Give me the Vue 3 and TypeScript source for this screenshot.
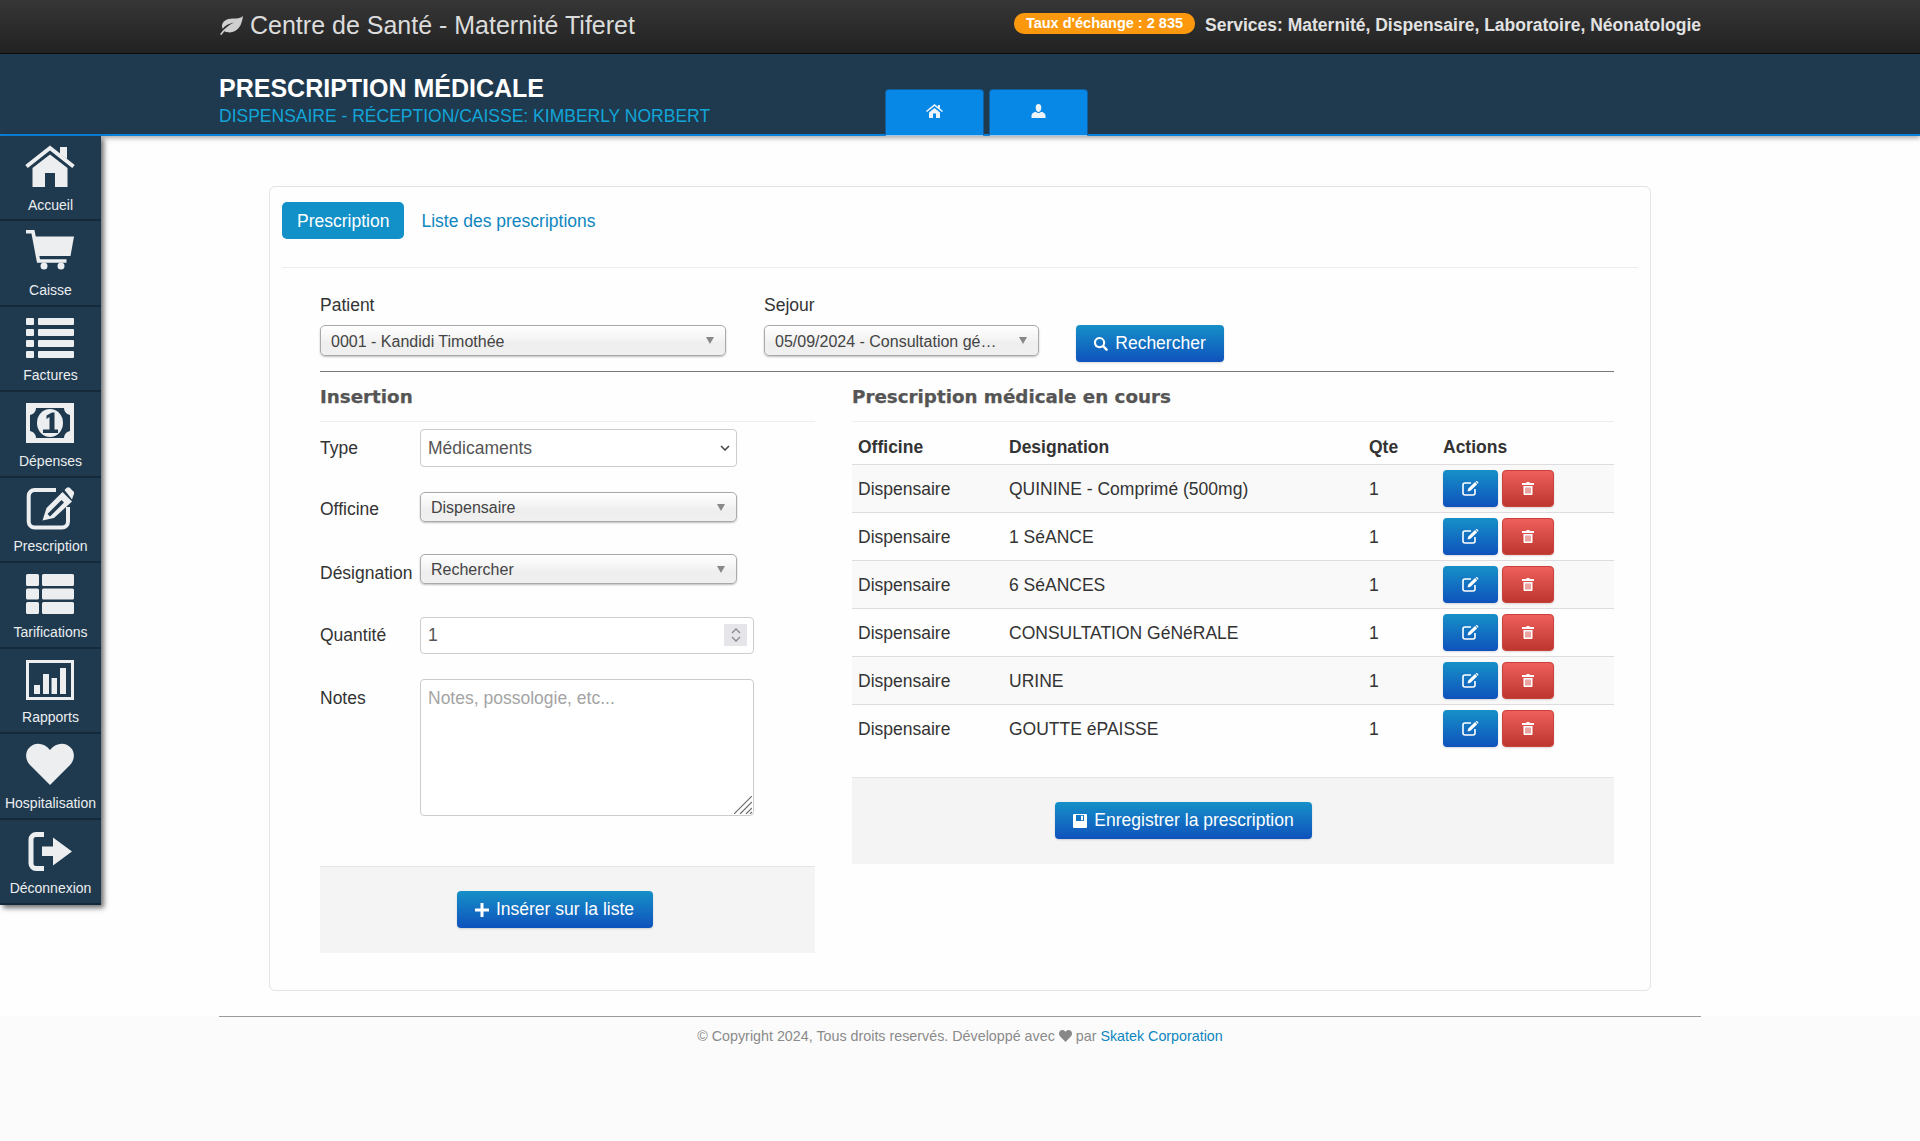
<script setup lang="ts">
interface Shape { d: string; fill?: string; stroke?: string; sw?: number }
interface MenuItem { label: string; w: number; h: number; top: number; shapes: Shape[] }

const L = '#eceef0'
const D = '#1f3a4f'

const menu: MenuItem[] = [
  { label: 'Accueil', w: 50, h: 42, top: 9, shapes: [
    { d: 'M1.500 21.500 25 3 48.500 21.500', fill: 'none', stroke: L, sw: 4 },
    { d: 'M35 2h7v12l-7-5z', fill: L },
    { d: 'M7.500 23 25 9.500 42.500 23v19H30V28H20v14H7.500z', fill: L }
  ] },
  { label: 'Caisse', w: 48, h: 41, top: 9, shapes: [
    { d: 'M0 1.800h7L12.500 31h28', fill: 'none', stroke: L, sw: 3.600 },
    { d: 'M8 6.500h40l-3.500 19.500H11.500z', fill: L },
    { d: 'M14.500 36a3.500 3.500 0 1 0 7 0 3.500 3.500 0 1 0-7 0zM31.500 36a3.500 3.500 0 1 0 7 0 3.500 3.500 0 1 0-7 0z', fill: L }
  ] },
  { label: 'Factures', w: 48, h: 41, top: 11, shapes: [
    { d: 'M1 0h6a1 1 0 0 1 1 1v5a1 1 0 0 1-1 1H1a1 1 0 0 1-1-1V1a1 1 0 0 1 1-1zM13 0h34a1 1 0 0 1 1 1v5a1 1 0 0 1-1 1H13a1 1 0 0 1-1-1V1a1 1 0 0 1 1-1z', fill: L },
    { d: 'M1 11h6a1 1 0 0 1 1 1v5a1 1 0 0 1-1 1H1a1 1 0 0 1-1-1v-5a1 1 0 0 1 1-1zM13 11h34a1 1 0 0 1 1 1v5a1 1 0 0 1-1 1H13a1 1 0 0 1-1-1v-5a1 1 0 0 1 1-1z', fill: L },
    { d: 'M1 22h6a1 1 0 0 1 1 1v5a1 1 0 0 1-1 1H1a1 1 0 0 1-1-1v-5a1 1 0 0 1 1-1zM13 22h34a1 1 0 0 1 1 1v5a1 1 0 0 1-1 1H13a1 1 0 0 1-1-1v-5a1 1 0 0 1 1-1z', fill: L },
    { d: 'M1 33h6a1 1 0 0 1 1 1v5a1 1 0 0 1-1 1H1a1 1 0 0 1-1-1v-5a1 1 0 0 1 1-1zM13 33h34a1 1 0 0 1 1 1v5a1 1 0 0 1-1 1H13a1 1 0 0 1-1-1v-5a1 1 0 0 1 1-1z', fill: L }
  ] },
  { label: 'Dépenses', w: 48, h: 41, top: 11, shapes: [
    { d: 'M0 0h48v40H0z', fill: L },
    { d: 'M10 5h28c0 3 2 6 6 7v16c-4 1-6 4-6 7H10c0-3-2-6-6-7V12c4-1 6-4 6-7z', fill: D },
    { d: 'M11 20a13 14 0 1 0 26 0 13 14 0 1 0-26 0z', fill: L },
    { d: 'M20.500 12.500 26 9.500h2.500v17H32v3.500H17v-3.500h6.500V14l-3 2z', fill: D }
  ] },
  { label: 'Prescription', w: 48, h: 43, top: 9, shapes: [
    { d: 'M30 3H8.700a6 6 0 0 0-6 6v25.500a6 6 0 0 0 6 6H36a6 6 0 0 0 6-6V20', fill: 'none', stroke: L, sw: 4 },
    { d: 'M16.500 33.500l4-12.500L36.500 5 46 14.500 28 31z', fill: L },
    { d: 'M38.500 3l2-2c1-1 2.500-1 3.500 0l3.500 3.500c1 1 1 2.500 0 3.500l-1.500 4.500z', fill: L },
    { d: 'M21.500 27l2.500 2.500L38 15.500 35.500 13z', fill: D }
  ] },
  { label: 'Tarifications', w: 48, h: 40, top: 11, shapes: [
    { d: 'M1.500 0h10a1.500 1.500 0 0 1 1.500 1.500v9a1.500 1.500 0 0 1-1.500 1.500h-10A1.500 1.500 0 0 1 0 10.500v-9A1.500 1.500 0 0 1 1.500 0zM17.500 0h29A1.500 1.500 0 0 1 48 1.500v9a1.500 1.500 0 0 1-1.500 1.500h-29a1.500 1.500 0 0 1-1.500-1.500v-9A1.500 1.500 0 0 1 17.500 0z', fill: L },
    { d: 'M1.500 14.500h10a1.500 1.500 0 0 1 1.500 1.500v8a1.500 1.500 0 0 1-1.500 1.500h-10A1.500 1.500 0 0 1 0 24v-8a1.500 1.500 0 0 1 1.500-1.500zM17.500 14.500h29A1.500 1.500 0 0 1 48 16v8a1.500 1.500 0 0 1-1.500 1.500h-29A1.500 1.500 0 0 1 16 24v-8a1.500 1.500 0 0 1 1.500-1.500z', fill: L },
    { d: 'M1.500 28h10a1.500 1.500 0 0 1 1.500 1.500v9a1.500 1.500 0 0 1-1.500 1.500h-10A1.500 1.500 0 0 1 0 38.500v-9A1.500 1.500 0 0 1 1.500 28zM17.500 28h29a1.500 1.500 0 0 1 1.500 1.500v9a1.500 1.500 0 0 1-1.500 1.500h-29a1.500 1.500 0 0 1-1.500-1.500v-9a1.500 1.500 0 0 1 1.500-1.500z', fill: L }
  ] },
  { label: 'Rapports', w: 48, h: 41, top: 11, shapes: [
    { d: 'M1.500 1.500h45v37h-45z', fill: 'none', stroke: L, sw: 3 },
    { d: 'M8 25h6v9H8zM17 14h6v20h-6zM25.500 18h5.500v16h-5.500zM34 8h6v26h-6z', fill: L }
  ] },
  { label: 'Hospitalisation', w: 48, h: 42, top: 9, shapes: [
    { d: 'M24 42 4 22C-1 17-1 9 3 5c5-6 15-6 21 2 6-8 16-8 21-2 4 4 4 12-1 17z', fill: L }
  ] },
  { label: 'Déconnexion', w: 44, h: 42, top: 9, shapes: [
    { d: 'M16 5.500H8a5 5 0 0 0-5 5v24a5 5 0 0 0 5 5h8', fill: 'none', stroke: L, sw: 5 },
    { d: 'M14 17.500h11V8.500l19 14-19 14v-9.500H14z', fill: L }
  ] }
]

const rows: string[] = [
  'QUININE - Comprimé (500mg)',
  '1 SéANCE',
  '6 SéANCES',
  'CONSULTATION GéNéRALE',
  'URINE',
  'GOUTTE éPAISSE'
]
</script>

<template>
  <div class="page">
    <header class="topbar">
      <div class="wrap top-inner">
        <div class="brand">
          <svg class="leaf" viewBox="0 0 24 19"><path d="M24 0C22 2 19 2.500 14 2.500 7 2.500 3 6 3 10c0 1 .2 2 .7 2.800C6 9.500 10 7.500 15 6.500 10 9 5 12.500 1 18.200L2.500 19c1-1.500 2-2.800 3-3.800 1.500.8 3 1.200 5 1.200C19 16.400 23 9 24 0z" /></svg>
          <span>Centre de Santé - Maternité Tiferet</span>
        </div>
        <div class="top-right">
          <span class="pill">Taux d'échange : 2 835</span>
          <span class="services">Services: Maternité, Dispensaire, Laboratoire, Néonatologie</span>
        </div>
      </div>
    </header>

    <section class="subbar">
      <div class="wrap sub-inner">
        <div class="titles">
          <h1>PRESCRIPTION MÉDICALE</h1>
          <p>DISPENSAIRE - RÉCEPTION/CAISSE: KIMBERLY NORBERT</p>
        </div>
        <nav class="head-tabs">
          <a class="head-tab">
            <svg width="17" height="14" viewBox="0 0 17 14"><path d="M8.500 0 0 7l1 1 7.500-6L16 8l1-1-3-2.500V1h-2v1.800zM3 8.500V14h4V9.500h3V14h4V8.500L8.500 4z" fill="#eef3f8" /></svg>
          </a>
          <a class="head-tab">
            <svg width="15" height="14" viewBox="0 0 15 14"><path d="M7.500 0C5.500 0 4.700 1.500 4.700 3.500S5.500 8 7.500 8s2.800-2.500 2.800-4.500S9.500 0 7.500 0zM5 7.800C2.500 8.500.5 9.500.5 11.500V14h14v-2.500c0-2-2-3-4.500-3.700-.6.800-1.500 1.200-2.500 1.200S5.600 8.600 5 7.800z" fill="#eef3f8" /></svg>
          </a>
        </nav>
      </div>
    </section>

    <aside class="sidebar">
      <a v-for="item in menu" :key="item.label" class="side-item">
        <span class="side-icon" :style="{ paddingTop: item.top + 'px' }">
          <svg :width="item.w" :height="item.h" :viewBox="`0 0 ${item.w} ${item.h}`">
            <path v-for="(s, i) in item.shapes" :key="i" :d="s.d" :fill="s.fill" :stroke="s.stroke" :stroke-width="s.sw" />
          </svg>
        </span>
        <span class="side-label">{{ item.label }}</span>
      </a>
    </aside>

    <main class="main">
      <div class="card">
        <div class="tabs">
          <a class="tab active">Prescription</a>
          <a class="tab">Liste des prescriptions</a>
        </div>

        <div class="card-body">
          <div class="filters">
            <div class="filter patient">
              <label>Patient</label>
              <div class="s2"><span class="s2-text">0001 - Kandidi Timothée</span><i class="s2-arrow"></i></div>
            </div>
            <div class="filter sejour">
              <label>Sejour</label>
              <div class="s2"><span class="s2-text">05/09/2024 - Consultation gé…</span><i class="s2-arrow"></i></div>
            </div>
            <button class="btn btn-blue search-btn" type="button">
              <svg width="14" height="14" viewBox="0 0 15 15"><path d="M6 0a6 6 0 1 0 3.200 11L12.800 14.600a1.300 1.300 0 0 0 1.800-1.800L11 9.200A6 6 0 0 0 6 0zm0 2.200a3.800 3.800 0 1 1 0 7.600 3.800 3.800 0 0 1 0-7.600z" fill="#fff" /></svg>
              Rechercher
            </button>
          </div>

          <div class="columns">
            <section class="col-left">
              <h2>Insertion</h2>
              <div class="form-row type-row">
                <label>Type</label>
                <div class="field">
                  <select class="native"><option>Médicaments</option></select>
                  <svg class="chevron" width="10" height="6" viewBox="0 0 10 6"><path d="M1 1l4 4 4-4" fill="none" stroke="#444" stroke-width="1.500" /></svg>
                </div>
              </div>
              <div class="form-row officine-row">
                <label>Officine</label>
                <div class="s2 s2-form"><span class="s2-text">Dispensaire</span><i class="s2-arrow"></i></div>
              </div>
              <div class="form-row designation-row">
                <label>Désignation</label>
                <div class="s2 s2-form"><span class="s2-text">Rechercher</span><i class="s2-arrow"></i></div>
              </div>
              <div class="form-row qty-row">
                <label>Quantité</label>
                <div class="field">
                  <input class="num" type="number" value="1" />
                  <span class="spin">
                    <svg width="10" height="16" viewBox="0 0 10 16"><path d="M1 6l4-4 4 4M1 10l4 4 4-4" fill="none" stroke="#8a8a8a" stroke-width="1.300" /></svg>
                  </span>
                </div>
              </div>
              <div class="form-row notes-row">
                <label>Notes</label>
                <div class="field">
                  <textarea class="notes" placeholder="Notes, possologie, etc..."></textarea>
                  <svg class="grip" width="18" height="18" viewBox="0 0 18 18"><path d="M0 18 18 0M6 18 18 6M12 18l6-6M16 18l2-2" fill="none" stroke="#6d6d6d" stroke-width="1.200" /></svg>
                </div>
              </div>
              <div class="actions left-actions">
                <button class="btn btn-blue insert-btn" type="button">
                  <svg width="14" height="14" viewBox="0 0 14 14"><path d="M5.500 0h3v5.500H14v3H8.500V14h-3V8.500H0v-3h5.500z" fill="#fff" /></svg>
                  Insérer sur la liste
                </button>
              </div>
            </section>

            <section class="col-right">
              <h2>Prescription médicale en cours</h2>
              <table>
                <thead>
                  <tr>
                    <th class="c1">Officine</th>
                    <th class="c2">Designation</th>
                    <th class="c3">Qte</th>
                    <th class="c4">Actions</th>
                  </tr>
                </thead>
                <tbody>
                  <tr v-for="r in rows" :key="r">
                    <td class="txt">Dispensaire</td>
                    <td class="txt">{{ r }}</td>
                    <td class="txt">1</td>
                    <td>
                      <div class="row-btns">
                        <button class="btn btn-blue mini edit" type="button">
                          <svg width="17" height="15" viewBox="0 0 17 15"><path d="M9 2H3a2 2 0 0 0-2 2v8a2 2 0 0 0 2 2h8a2 2 0 0 0 2-2V8" fill="none" stroke="#fff" stroke-width="1.600" /><path d="M5.500 10.500l.8-3L13 1l2.200 2.200L8.500 9.800zM14 .2c.4-.3.900-.3 1.200 0l1 1c.3.300.3.800 0 1.100l-.4.400L13.600.6z" fill="#fff" /></svg>
                        </button>
                        <button class="btn btn-red mini del" type="button">
                          <svg width="12" height="13" viewBox="0 0 12 13"><path d="M4.500 0h3v1H12v2H0V1h4.500zM1.500 4h9v8a1 1 0 0 1-1 1h-7a1 1 0 0 1-1-1zM3.500 5.500v6h1v-6zM5.500 5.500v6h1v-6zM7.500 5.500v6h1v-6z" fill="#fff" fill-rule="evenodd" /></svg>
                        </button>
                      </div>
                    </td>
                  </tr>
                </tbody>
              </table>
              <div class="actions right-actions">
                <button class="btn btn-blue save-btn" type="button">
                  <svg width="14" height="14" viewBox="0 0 14 14"><path d="M1 0h12a1 1 0 0 1 1 1v12a1 1 0 0 1-1 1H1a1 1 0 0 1-1-1V1a1 1 0 0 1 1-1zm2 1v6h8V1zm5 .7h2v4.500H8z" fill="#fff" fill-rule="evenodd" /></svg>
                  Enregistrer la prescription
                </button>
              </div>
            </section>
          </div>
        </div>
      </div>
    </main>

    <footer class="footer">
      <div class="wrap foot-inner">
        © Copyright 2024, Tous droits reservés. Développé avec
        <svg width="13" height="12" viewBox="0 0 13 12"><path d="M6.500 12 1 6.200C-.4 4.700-.3 2.300 1 1c1.500-1.400 4-1.300 5.500.8C8-.3 10.500-.4 12 1c1.300 1.300 1.400 3.700 0 5.200z" fill="#888" /></svg>
        par <a>Skatek Corporation</a>
      </div>
    </footer>
  </div>
</template>

<style scoped>
.page {
  position: relative;
  width: 1920px;
  height: 1141px;
  overflow: hidden;
  background: #fefefe;
  font-family: "Liberation Sans", Arial, sans-serif;
  color: #333;
}
.wrap { width: 1482px; margin: 0 auto; }

/* top bar */
.topbar {
  height: 53px;
  background: linear-gradient(to bottom, #363636, #222222);
  border-bottom: 1px solid #0c0c0c;
}
.top-inner { height: 100%; display: flex; justify-content: space-between; align-items: center; }
.brand { display: flex; align-items: center; gap: 7px; color: #dcdcdc; font-size: 25px; margin-top: -3px; }
.leaf { width: 24px; height: 19px; fill: #cfcfcf; }
.top-right { display: flex; align-items: center; gap: 10px; }
.pill {
  display: block;
  background: #fb980e;
  color: #fff;
  font-size: 14.500px;
  font-weight: 700;
  line-height: 20px;
  height: 21px;
  padding: 0 12px;
  border-radius: 10px;
  margin-top: -6px;
}
.services { color: #e2e2e2; font-size: 17.500px; font-weight: 700; margin-top: -2px; }

/* title band */
.subbar {
  height: 80px;
  background: #1f3a4f;
  border-bottom: 2px solid #0a80d8;
  box-shadow: 0 2px 5px rgba(0, 0, 0, 0.35);
  position: relative;
}
.sub-inner { display: flex; height: 100%; }
.titles { width: 666px; padding-top: 20px; }
.titles h1 { margin: 0; font-size: 25px; line-height: 28px; font-weight: 700; color: #fff; }
.titles p { margin: 4px 0 0; font-size: 17.500px; line-height: 20px; color: #12a5d8; }
.head-tabs { display: flex; align-items: flex-end; gap: 5px; margin-bottom: -2px; }
.head-tab {
  width: 99px;
  height: 47px;
  background: #0787e6;
  border: 1px solid #0f5f9f;
  border-bottom: 1px solid #9cc9ea;
  border-radius: 4px 4px 0 0;
  box-sizing: border-box;
  display: flex;
  justify-content: center;
  padding-top: 14px;
}

/* sidebar */
.sidebar {
  position: absolute;
  left: 0;
  top: 136px;
  width: 101px;
  height: 769px;
  background: #1f3a4f;
  box-shadow: 3px 3px 5px rgba(0, 0, 0, 0.55);
}
.side-item {
  display: flex;
  flex-direction: column;
  align-items: center;
  height: 85.440px;
  box-sizing: border-box;
  border-bottom: 2px solid #14293a;
  color: #eceef0;
  font-size: 14px;
}
.side-icon { height: 56px; margin-right: 1px; box-sizing: border-box; display: flex; align-items: flex-start; }
.side-label { line-height: 16px; margin-top: 4.500px; white-space: nowrap; }

/* card */
.main { padding-top: 50px; }
.card {
  width: 1382px;
  height: 805px;
  margin-left: 269px;
  box-sizing: border-box;
  border: 1px solid #e3e3e3;
  border-radius: 6px;
  padding: 15px 12px 0;
  background: #fefefe;
}
.tabs { display: flex; align-items: center; gap: 17px; height: 37px; padding-bottom: 28px; border-bottom: 1px solid #eeeeee; box-sizing: content-box; }
.tab { font-size: 17.500px; line-height: 39px; height: 37px; color: #0f86bf; }
.tab.active { background: #1290c8; color: #fff; padding: 0 15px; border-radius: 5px; }
.card-body { padding: 27px 24px 0 38px; }

/* filters */
.filters {
  display: flex;
  align-items: flex-end;
  height: 77px;
  border-bottom: 1px solid #777777;
  box-sizing: border-box;
  padding-bottom: 9px;
}
.filter label { display: block; font-size: 17.500px; line-height: 21px; color: #333; margin-bottom: 9px; }
.patient { width: 406px; margin-right: 38px; }
.sejour { width: 275px; margin-right: 37px; }
.filter { padding-bottom: 6px; }
.s2 {
  position: relative;
  height: 31px;
  box-sizing: border-box;
  border: 1px solid #aaaaaa;
  border-radius: 5px;
  background: linear-gradient(to bottom, #ffffff 0%, #f4f4f4 45%, #eeeeee 60%, #f0f0f0 100%);
  box-shadow: 0 1px 2px rgba(0, 0, 0, 0.25);
  display: flex;
  align-items: center;
  padding: 2px 30px 0 10px;
  font-size: 16px;
  color: #444;
}
.s2-text { white-space: nowrap; }
.s2-arrow {
  position: absolute;
  right: 11px;
  top: 11px;
  width: 0;
  height: 0;
  border-left: 4px solid transparent;
  border-right: 4px solid transparent;
  border-top: 7px solid #888888;
}

/* buttons */
.btn {
  font-family: inherit;
  border: 0;
  color: #fff;
  font-size: 17.500px;
  height: 37px;
  border-radius: 4px;
  padding: 0;
  display: inline-flex;
  align-items: center;
  justify-content: center;
  gap: 7px;
  box-shadow: 0 1px 2px rgba(0, 0, 0, 0.15);
}
.btn-blue { background: linear-gradient(to bottom, #1690c8, #0f52bc); }
.btn-red { background: linear-gradient(to bottom, #ee5f5b, #bd362f); border: 1px solid #c9423c; box-sizing: border-box; }
.search-btn { width: 148px; }
.edit { width: 55px; }
.del { width: 51px; }

/* columns */
.columns { display: flex; gap: 37px; }
.col-left { width: 496px; }
.col-right { width: 762px; }
h2 {
  margin: 0;
  height: 50px;
  line-height: 50px;
  box-sizing: border-box;
  border-bottom: 1px solid #eeeeee;
  font-family: "DejaVu Sans", sans-serif;
  font-size: 18.300px;
  font-weight: 700;
  color: #555555;
  -webkit-text-stroke: 0.25px #555555;
}

/* form */
.form-row { display: flex; align-items: flex-start; }
.form-row label { width: 100px; flex: none; font-size: 17.500px; color: #333; white-space: nowrap; }
.field { position: relative; }
.native {
  display: block;
  width: 317px;
  height: 38px;
  box-sizing: border-box;
  background: #fff;
  border: 1px solid #cccccc;
  border-radius: 4px;
  padding: 0 7px;
  appearance: none;
  font-family: inherit;
  font-size: 17.500px;
  color: #555;
}
.chevron { position: absolute; right: 7px; top: 16px; }
.s2-form { width: 317px; height: 30px; font-size: 16px; }
.type-row { margin-top: 7px; height: 38px; }
.type-row label { line-height: 38px; }
.officine-row { margin-top: 25px; height: 30px; }
.officine-row label { line-height: 34px; }
.designation-row { margin-top: 32px; height: 30px; }
.designation-row label { line-height: 38px; }
.qty-row { margin-top: 33px; height: 37px; }
.qty-row label { line-height: 36px; }
.num {
  display: block;
  width: 334px;
  height: 37px;
  box-sizing: border-box;
  border: 1px solid #cccccc;
  border-radius: 4px;
  padding: 0 7px;
  font-family: inherit;
  font-size: 17.500px;
  color: #555;
  outline: none;
  appearance: textfield;
}
.num::-webkit-inner-spin-button { appearance: none; margin: 0; }
.spin {
  position: absolute;
  right: 7px;
  top: 7px;
  width: 23px;
  height: 22px;
  background: #e5e5ea;
  display: flex;
  align-items: center;
  justify-content: center;
}
.notes-row { margin-top: 25px; height: 137px; }
.notes-row label { line-height: 38px; }
.notes {
  display: block;
  width: 334px;
  height: 137px;
  box-sizing: border-box;
  border: 1px solid #cccccc;
  border-radius: 4px;
  padding: 8px 7px;
  font-family: inherit;
  font-size: 17.500px;
  line-height: 20px;
  color: #555;
  outline: none;
  resize: none;
}
.notes::placeholder { color: #a4a4a4; opacity: 1; }
.grip { position: absolute; right: 2px; bottom: 2px; }
.actions {
  background: #f4f4f4;
  border-top: 1px solid #e5e5e5;
  height: 87px;
  box-sizing: border-box;
  display: flex;
  justify-content: center;
  padding-top: 24px;
}
.left-actions { margin-top: 50px; padding-right: 26px; }
.insert-btn { width: 196px; }
.right-actions { margin-top: 25px; padding-right: 99px; }
.save-btn { width: 257px; }

/* table */
table { width: 762px; border-collapse: collapse; table-layout: fixed; font-size: 17.500px; color: #333; }
th { height: 42px; text-align: left; font-weight: 700; padding: 10px 6px 0; border-bottom: 1px solid #dddddd; box-sizing: border-box; }
.c1 { width: 151px; }
.c2 { width: 360px; }
.c3 { width: 74px; }
td { height: 48px; padding: 0 6px; border-bottom: 1px solid #dddddd; box-sizing: border-box; }
td.txt { padding-top: 2px; }
tbody tr:last-child td { border-bottom: 0; }
tbody tr:nth-child(odd) { background: #f9f9f9; }
.row-btns { display: flex; gap: 4px; }
.row-btns .btn { gap: 0; }
.del { width: 52px; }

/* footer */
.footer {
  position: absolute;
  left: 0;
  right: 0;
  top: 1016px;
  bottom: 0;
  background: #fbfbfb;
}
.foot-inner {
  border-top: 1px solid #999999;
  text-align: center;
  font-size: 14.300px;
  color: #8a8a8a;
  padding-top: 10px;
  line-height: 19px;
}
.foot-inner a { color: #0f86bf; }
.foot-inner svg { vertical-align: -1px; }
</style>

<style>
html, body { margin: 0; padding: 0; }
</style>
